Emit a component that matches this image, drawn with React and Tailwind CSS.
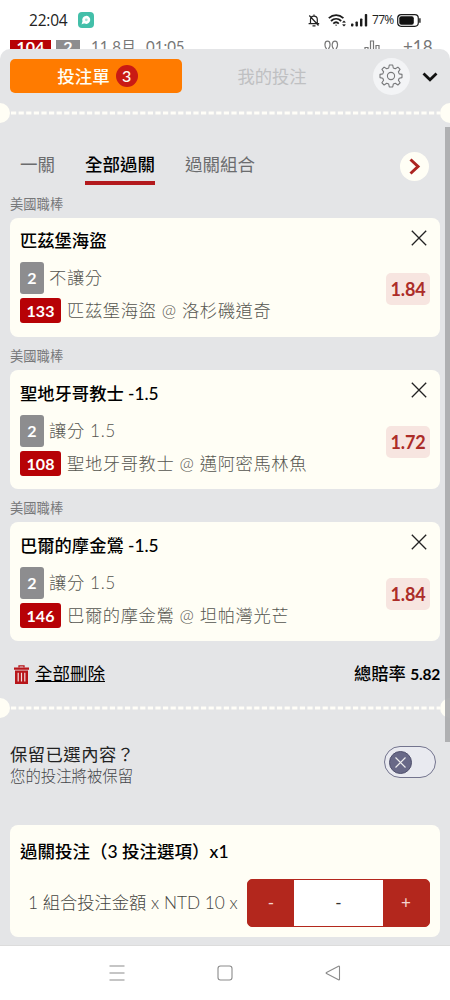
import React, { useState } from 'react';

const initialBets = [
    { id: 1, league: '美國職棒', title: '匹茲堡海盜', market: '不讓分', code: '133', match: '匹茲堡海盜 @ 洛杉磯道奇', odds: '1.84' },
    { id: 2, league: '美國職棒', title: '聖地牙哥教士 -1.5', market: '讓分 1.5', code: '108', match: '聖地牙哥教士 @ 邁阿密馬林魚', odds: '1.72' },
    { id: 3, league: '美國職棒', title: '巴爾的摩金鶯 -1.5', market: '讓分 1.5', code: '146', match: '巴爾的摩金鶯 @ 坦帕灣光芒', odds: '1.84' },
];

const tabs = ['一關', '全部過關', '過關組合'];

const StatusBar = () => (
    <div className="flex h-10 items-center justify-between pl-[29px] pr-[29px]">
        <div className="flex items-center">
            <span className="w-[49px] font-['Open_Sans','Noto_Sans',sans-serif] text-[15.500px] leading-5 tracking-[-0.200px] text-[#222]">22:04</span>
            <svg width="16" height="16" viewBox="0 0 16 16">
                <rect width="16" height="16" rx="4" fill="#43bfa9" />
                <path d="M3.500 12.500l1-3.200a4 4 0 1 1 2.300 2.300c-1.200-.3-2 .1-3.300.9z" fill="#fff" />
                <circle cx="8.300" cy="7.800" r="1.400" fill="#a5e0d5" />
            </svg>
        </div>
        <div className="flex items-center">
            <svg width="12" height="13" viewBox="0 0 12 13" fill="none" stroke="#222" strokeWidth="1.200" className="mr-[8px]">
                <path d="M2.500 9.500V5.500a3.400 3.400 0 0 1 6.800 0v4M.6 9.700h10.600M4.500 11.800h3M6 .5v1.500M1.300 1.500l9.200 10" />
            </svg>
            <svg width="18" height="13" viewBox="0 0 18 13" fill="none" stroke="#1c1c1c" strokeWidth="1.800" className="mr-[5px]">
                <path d="M.8 4.200c4.400-4 10.200-4 14.600 0M3 7c3-2.900 7.200-2.900 10.200 0M5.300 9.600c1.700-1.600 3.800-1.600 5.500 0" />
                <path d="M7 10.800h2.200L8.100 12z" fill="#1c1c1c" stroke="none" />
                <path d="M14.700 8.700l1.300-1.400 1.300 1.400M14.700 10.300l1.300 1.400 1.300-1.400" strokeWidth="1.200" />
            </svg>
            <svg width="17" height="13" viewBox="0 0 17 13" fill="#1c1c1c" className="mr-[4px]">
                <rect x="0" y="9.500" width="2.400" height="3" rx=".8" />
                <rect x="4.500" y="7.500" width="2.400" height="5" rx=".8" />
                <rect x="9" y="4.500" width="2.400" height="8" rx=".8" />
                <rect x="13.800" y="0" width="2.400" height="12.500" rx=".8" />
            </svg>
            <span className="w-[25px] whitespace-nowrap font-['Open_Sans','Noto_Sans',sans-serif] text-[12px] tracking-[-0.700px] text-[#222]">77%</span>
            <svg width="24" height="13" viewBox="0 0 24 13">
                <rect x=".7" y=".7" width="20.600" height="11.600" rx="3.500" fill="none" stroke="#1c1c1c" strokeWidth="1.200" />
                <rect x="2.300" y="2.300" width="14.500" height="8.400" rx="2" fill="#111" />
                <path d="M22.900 4.200v4.600" stroke="#1c1c1c" strokeWidth="1.400" />
            </svg>
        </div>
    </div>
);

// Strip of the match list that stays visible above the sheet
const MatchRow = () => (
    <div className="flex h-[9px] items-start overflow-hidden pl-[10px] text-[#777]">
        <span className="h-6 w-[41px] bg-[#b70206] text-center text-[16px] font-bold leading-[13px] text-white">104</span>
        <span className="ml-[5px] h-6 w-6 bg-[#8d8d8f] text-center text-[16px] font-bold leading-[13px] text-white">2</span>
        <span className="ml-[11px] w-[55px] whitespace-nowrap text-[15px] leading-[13px]">11 8月</span>
        <span className="w-[177px] text-[15px] leading-[13px]">01:05</span>
        <svg width="18" height="14" viewBox="0 0 18 14" fill="none" stroke="#777" strokeWidth="1.200" className="mr-[23px]">
            <path d="M1 10.500h2.300V8.500C1.500 6.500 1.200 1.200 4.500 1.200S7.500 6.500 5.700 8.500v2h4.600v-2c-1.800-2-1.500-7.300 1.700-7.300s3 5.300 1.300 7.300v2H16" />
        </svg>
        <svg width="17" height="14" viewBox="0 0 17 14" fill="none" stroke="#777" strokeWidth="1.200" className="mr-[22px]">
            <path d="M1 14V7.500h3V14M6.500 14V1h3v13M12 14V5.500h3V14" />
        </svg>
        <span className="text-[17px] leading-[13px]">+18</span>
    </div>
);

const TicketDivider = () => (
    <div className="flex h-5 items-center overflow-hidden">
        <span className="-ml-[10px] h-5 w-5 shrink-0 rounded-full bg-[#fffef5]"></span>
        <svg width="430" height="4" viewBox="0 0 430 4" className="shrink-0">
            <path d="M1 2h429" stroke="#fffef8" strokeWidth="3" strokeDasharray="5.200 2.400" />
        </svg>
        <span className="h-5 w-5 shrink-0 rounded-full bg-[#fffef5]"></span>
    </div>
);

const BetCard = ({ bet, onRemove }) => (
    <div className="mb-[12.400px]">
        <p className="h-[21px] text-[13.300px] leading-[14px] text-[#77787a]">{bet.league}</p>
        <div className="flex h-[119px] justify-between rounded-lg bg-[#fffef5] pl-[10px] pr-[10px]">
            <div>
                <h3 className="mb-[9px] pt-[11.700px] text-[17.300px] font-medium leading-[24px] text-black">{bet.title}</h3>
                <div className="flex h-8 items-center">
                    <span className="mr-[5px] h-8 w-6 rounded-[3px] bg-[#8d8d8f] text-center text-[16px] font-bold leading-8 text-white">2</span>
                    <span className="text-[17.300px] font-light leading-8 tracking-[0.600px] text-[#55554f]">{bet.market}</span>
                </div>
                <div className="mt-1 flex h-[25px] items-center">
                    <span className="mr-[6px] h-[25px] w-[41px] rounded-[3px] bg-[#b70206] text-center text-[16px] font-bold leading-[25px] text-white">{bet.code}</span>
                    <span className="whitespace-nowrap text-[17.300px] font-light leading-[25px] tracking-[0.600px] text-[#55554f]">{bet.match}</span>
                </div>
            </div>
            <div className="flex flex-col items-end">
                <button type="button" onClick={() => onRemove(bet.id)} aria-label="移除" className="mr-[3px] mt-[12px]">
                    <svg width="16" height="16" viewBox="0 0 16 16" stroke="#222" strokeWidth="1.300" className="block">
                        <path d="M.8.8l14.400 14.400M15.200.8L.8 15.200" />
                    </svg>
                </button>
                <span className="mt-[27.700px] h-8 w-11 rounded-[5px] bg-[#f7e5e0] text-center text-[18px] font-bold leading-8 tracking-[-0.200px] text-[#ac2c28]">{bet.odds}</span>
            </div>
        </div>
    </div>
);

const App = () => {
    const [bets, setBets] = useState(initialBets);
    const [activeTab, setActiveTab] = useState('全部過關');
    const [stake, setStake] = useState(0);

    const removeBet = (id) => setBets(bets.filter((b) => b.id !== id));

    return (
        <div className="relative flex h-[1000px] w-[450px] flex-col overflow-hidden bg-white font-['Lato','Noto_Sans_CJK_TC',sans-serif]">
            <StatusBar />
            <MatchRow />

            <div className="h-[896px] shrink-0 rounded-t-[10px] bg-[#e4e5e7]">
                {/* Header */}
                <div className="flex h-[54px] items-center pl-[10px] pr-[12px]">
                    <button type="button" className="flex h-[34px] w-[172px] items-center justify-center gap-[6px] rounded-[5px] bg-[#ff7b00] pl-[3px] text-[17.500px] font-medium text-[#fffef5]">
                        <span className="pt-[1px] leading-8">投注單</span>
                        <span className="h-[22px] w-[22px] rounded-full bg-[#c91a14] text-[16px] leading-[22px]">3</span>
                    </button>
                    <button type="button" className="w-[180px] pt-[1px] text-center text-[17.300px] leading-8 text-[#bfc0c2]">我的投注</button>
                    <button type="button" aria-label="設定" className="ml-[10.500px] flex h-[37px] w-[37px] items-center justify-center rounded-full bg-[#f3f4f6]">
                        <svg width="24" height="24" viewBox="0 0 24 24" fill="none" stroke="#77787a" strokeWidth="1.100" strokeLinejoin="round">
                            <path d="M10.300 1h3.400l.6 3 2 .8L18.900 3.100l2.200 2.200-1.700 2.600.8 2 2.800.5v3.200l-2.800.6-.8 2 1.700 2.600-2.200 2.200-2.600-1.700-2 .8-.6 2.900h-3.400l-.6-2.900-2-.8L5.100 21l-2.200-2.200 1.700-2.600-.8-2-2.800-.6v-3.200l2.800-.5.8-2-1.700-2.600 2.200-2.200 2.600 1.700 2-.8z" />
                            <circle cx="12" cy="12" r="3.600" />
                        </svg>
                    </button>
                    <svg width="16" height="10" viewBox="0 0 16 10" fill="none" stroke="#111" strokeWidth="2.800" className="ml-auto mt-[2px]">
                        <path d="M1.500 1.500L8 7.800l6.500-6.300" />
                    </svg>
                </div>

                <TicketDivider />

                {/* Tabs */}
                <div className="flex h-[72px] pl-5 pr-[21px] pt-[29px]">
                    {tabs.map((tab) => (
                        <button
                            key={tab}
                            type="button"
                            onClick={() => setActiveTab(tab)}
                            className={`mr-[30px] flex h-[33px] items-start whitespace-nowrap border-b-4 text-[17.500px] leading-[25px] ${activeTab === tab ? 'border-[#b3191d] font-medium text-black' : 'border-transparent text-[#6b6c6e]'}`}
                        >
                            {tab}
                        </button>
                    ))}
                    <span className="ml-auto flex h-[29px] w-[29px] items-center justify-center rounded-full bg-[#fffef5]">
                        <svg width="12" height="17" viewBox="0 0 12 17" fill="none" stroke="#ac2420" strokeWidth="3">
                            <path d="M1.500 1.500l7.500 7-7.500 7" />
                        </svg>
                    </span>
                </div>

                {/* Selections */}
                <div className="pl-[10px] pr-[10px] pt-[1.500px]">
                    {bets.map((bet) => (
                        <BetCard key={bet.id} bet={bet} onRemove={removeBet} />
                    ))}
                </div>

                <div className="-mt-[1.200px] flex h-[44px] items-center justify-between pl-[14px] pr-[10px] text-black">
                    <button type="button" onClick={() => setBets([])} className="flex items-center gap-[6px]">
                        <svg width="15" height="19" viewBox="0 0 15 19">
                            <path d="M5 2.500V.8h5v1.700" fill="none" stroke="#b7151a" strokeWidth="1.300" />
                            <path d="M0 2.500h15v2.200H0zM1 5.500h13V19H1z" fill="#b7151a" />
                            <path d="M4.200 7.700v8.800M7.500 7.700v8.800M10.800 7.700v8.800" stroke="#f3dede" strokeWidth="1.200" />
                        </svg>
                        <span className="text-[17.500px] leading-6 underline">全部刪除</span>
                    </button>
                    <span className="text-[17.300px] font-medium leading-6">總賠率 <span className="text-[15.500px] font-bold tracking-[-0.200px]">5.82</span></span>
                </div>

                <div className="mt-[2px]">
                    <TicketDivider />
                </div>

                {/* Keep selections */}
                <div className="flex h-[107px] justify-between pl-[10px] pr-[14px] pt-[26px]">
                    <div>
                        <p className="text-[17.300px] leading-[22px] tracking-[0.500px] text-[#222]">保留已選內容？</p>
                        <p className="text-[15.400px] font-light leading-[20px] text-[#45464a]">您的投注將被保留</p>
                    </div>
                    <div className="mt-[2px] flex h-8 w-[52px] items-center rounded-full border border-[#73748e] bg-[#e9eaf0] pl-[4px]">
                        <svg width="23" height="23" viewBox="0 0 23 23">
                            <circle cx="11.500" cy="11.500" r="11" fill="#686987" stroke="#50516d" />
                            <path d="M6.500 6.500l10 10M16.500 6.500l-10 10" stroke="#eee" strokeWidth="1.200" />
                        </svg>
                    </div>
                </div>

                {/* Stake */}
                <div className="mx-[10px] h-[112px] rounded-lg bg-[#fffef5] pl-[10px] pr-[10px] pt-[14px]">
                    <h3 className="whitespace-nowrap text-[17.500px] font-medium leading-[26px] text-black">過關投注（3 投注選項）x1</h3>
                    <div className="mt-[14px] flex items-center justify-between pl-2">
                        <span className="whitespace-nowrap text-[17.300px] font-light leading-6 text-[#45453f]">1 組合投注金額 x NTD 10 x</span>
                        <div className="flex h-12 w-[183px] shrink-0 overflow-hidden rounded-[5px] border border-[#b3271d] bg-[#b3271d] text-[17px] leading-[46px]">
                            <button type="button" onClick={() => setStake(Math.max(0, stake - 1))} className="w-[46px] text-[#f5d5d0]">-</button>
                            <span className="flex-1 bg-white text-center text-[#333]">{stake || '-'}</span>
                            <button type="button" onClick={() => setStake(stake + 1)} className="w-[46px] text-[#f5d5d0]">+</button>
                        </div>
                    </div>
                </div>
            </div>

            {/* System navigation */}
            <div className="flex h-[55px] items-center justify-center gap-[92px] border-t border-[#dcdcdc] bg-white">
                <svg width="16" height="16" viewBox="0 0 16 16" stroke="#8b8b8b" strokeWidth="1.100">
                    <path d="M.5 1h15M.5 8h15M.5 15h15" />
                </svg>
                <svg width="16" height="16" viewBox="0 0 16 16" fill="none" stroke="#8b8b8b" strokeWidth="1.100">
                    <rect x="1" y="1" width="14" height="14" rx="2.500" />
                </svg>
                <svg width="16" height="16" viewBox="0 0 16 16" fill="none" stroke="#8b8b8b" strokeWidth="1.100" strokeLinejoin="round">
                    <path d="M14.500 1.800v12.400q0 1-1 .5L1.500 8.600q-.8-.6 0-1.200l12-6.100q1-.5 1 .5z" />
                </svg>
            </div>

            {/* Scrollbar thumb */}
            <div className="absolute right-0 top-[127px] h-[615px] w-[5px] bg-[#a9aaac]/90"></div>
        </div>
    );
};

export default App;
